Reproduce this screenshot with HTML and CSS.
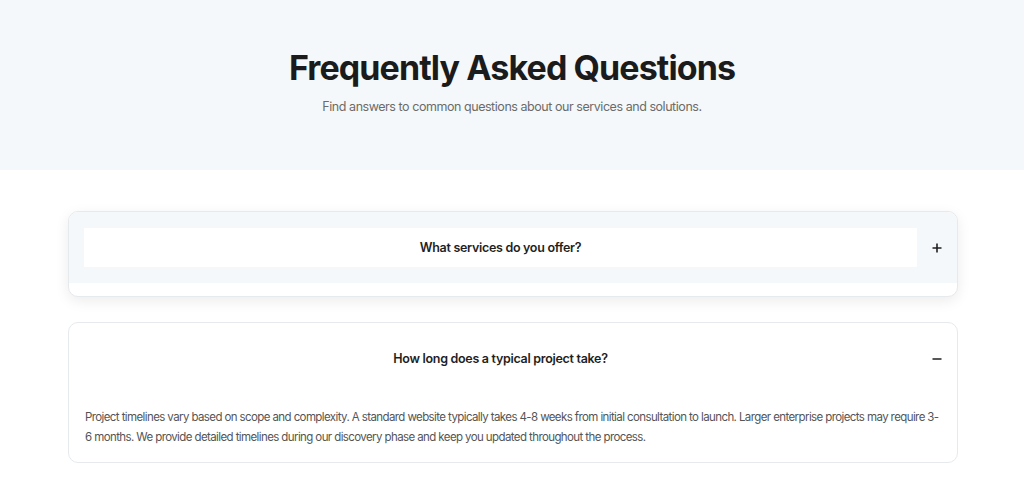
FILE: index.html
```html
<!DOCTYPE html>
<html lang="en">
<head>
<meta charset="utf-8">
<title>FAQ</title>
<link rel="stylesheet" href="styles.css">
</head>
<body>
<header class="hero">
  <h1 class="hero-title">Frequently Asked Questions</h1>
  <p class="hero-sub">Find answers to common questions about our services and solutions.</p>
</header>
<main class="faq">
  <div class="item item-hover">
    <div class="item-head">
      <button class="item-q">What services do you offer?</button>
      <span class="item-icon">
        <svg width="12" height="12" viewBox="0 0 12 12"><path d="M6 1.5v9M1.5 6h9" stroke="#1f1f1f" stroke-width="1.6" fill="none"/></svg>
      </span>
    </div>
    <div class="item-collapsed"></div>
  </div>
  <div class="item">
    <div class="item-head">
      <button class="item-q">How long does a typical project take?</button>
      <span class="item-icon">
        <svg width="12" height="12" viewBox="0 0 12 12"><path d="M1.5 6h9" stroke="#1f1f1f" stroke-width="1.6" fill="none"/></svg>
      </span>
    </div>
    <div class="item-a">Project timelines vary based on scope and complexity. A standard website typically takes 4-8 weeks from initial consultation to launch. Larger enterprise projects may require 3-6 months. We provide detailed timelines during our discovery phase and keep you updated throughout the process.</div>
  </div>
</main>
</body>
</html>
```
FILE: styles.css
```css
* { box-sizing: border-box; }
html, body { margin: 0; padding: 0; }
body {
  background: #ffffff;
  font-family: Inter, "Noto Sans", "Liberation Sans", sans-serif;
  color: #222;
}
.hero {
  background: #f5f8fa;
  height: 170px;
  display: flex;
  flex-direction: column;
  align-items: center;
  padding-top: 46px;
}
.hero-title {
  margin: 0;
  font-size: 34px;
  line-height: 44px;
  font-weight: 700;
  letter-spacing: -0.9px;
  color: #1b1b1b;
}
.hero-sub {
  margin: 7px 0 0;
  font-size: 12.5px;
  line-height: 20px;
  color: #6b6b6b;
  letter-spacing: -0.45px;
}
.faq {
  padding: 41px 66px 0 68px;
  display: flex;
  flex-direction: column;
  gap: 25px;
}
.item {
  border: 1px solid #e6eaed;
  border-radius: 10px;
  background: #fff;
  overflow: hidden;
}
.item-hover {
  box-shadow: 0 4px 14px rgba(0, 0, 0, 0.08);
}
.item-head {
  display: flex;
  align-items: center;
  padding: 16px 8px 16px 15px;
}
.item-hover .item-head { background: #f5f8fa; }
.item-q {
  flex: 1;
  height: 39px;
  border: 0;
  background: #fff;
  font-family: inherit;
  font-size: 12.5px;
  font-weight: 600;
  color: #1f1f1f;
  letter-spacing: -0.3px;
  cursor: pointer;
}
.item-icon {
  width: 24px;
  margin-left: 8px;
  display: flex;
  justify-content: center;
}
.item-collapsed { height: 13px; }
.item-a {
  padding: 13px 12px 15px 16px;
  font-size: 11.5px;
  line-height: 20px;
  color: #555;
  letter-spacing: -0.6px;
}
```
